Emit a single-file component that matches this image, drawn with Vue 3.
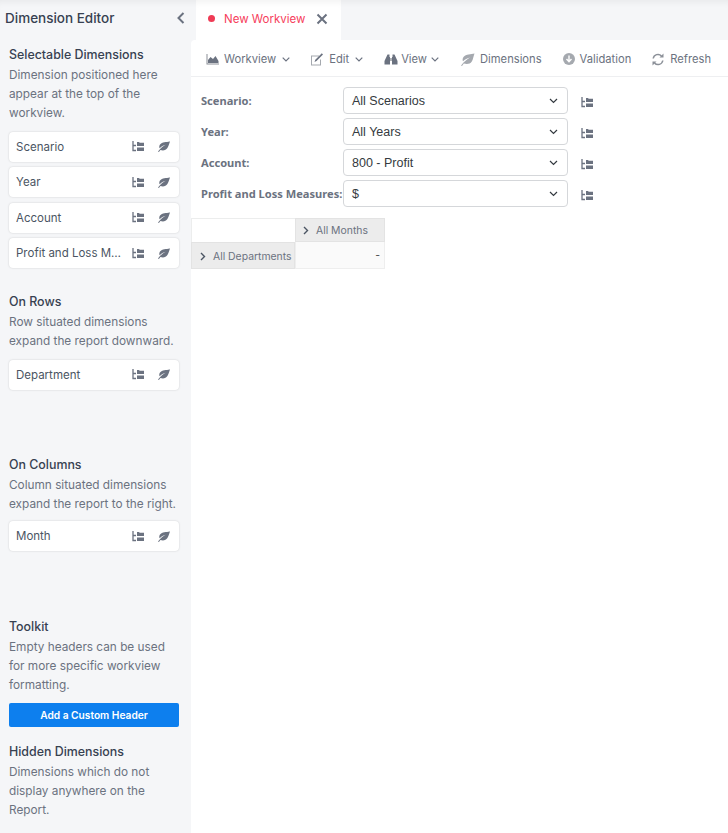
<script setup>
const selectable = ['Scenario', 'Year', 'Account', 'Profit and Loss Measures']
const filters = [
  { label: 'Scenario:', value: 'All Scenarios' },
  { label: 'Year:', value: 'All Years' },
  { label: 'Account:', value: '800 - Profit' },
  { label: 'Profit and Loss Measures:', value: '$' },
]
const tools = [
  { label: 'Workview', icon: 'chart', caret: true },
  { label: 'Edit', icon: 'edit', caret: true },
  { label: 'View', icon: 'binoc', caret: true },
  { label: 'Dimensions', icon: 'leaf', caret: false },
  { label: 'Validation', icon: 'down', caret: false },
  { label: 'Refresh', icon: 'refresh', caret: false },
]
</script>

<template>
  <div class="app">
    <aside class="side">
      <div class="side-head">
        <span class="side-title">Dimension Editor</span>
        <svg class="collapse" viewBox="0 0 10 14" width="10" height="14"><path d="M7.5 2 2.5 7l5 5" fill="none" stroke="#6b7280" stroke-width="2"/></svg>
      </div>

      <section class="sec sec-select">
        <h3>Selectable Dimensions</h3>
        <p>Dimension positioned here appear at the top of the workview.</p>
        <div class="cards">
          <div v-for="d in selectable" :key="d" class="card">
            <span class="card-name">{{ d }}</span>
            <svg class="ico-tree" viewBox="0 0 12 11" width="12" height="11"><path d="M1 0v9.500h3M1 4.500h3" fill="none" stroke="#6b7280" stroke-width="1.300"/><path d="M5 1h2l.7.8H12V5H5zM5 6.500h7V10H5z" fill="#6b7280"/></svg>
            <svg class="ico-leaf" viewBox="0 0 13 11" width="13" height="11"><path d="M12.500.5C9.500 1.300 5 .8 3 3.500 2 5 2.200 6.300 2.600 7.200 5 5 7 4.200 8.800 3.800 6.500 5 4 6.500 1 10.500l.9.400 1.500-2c2.500 1 5.500.5 7-1.800 1.200-1.800 1.700-4.500 2.600-6.600z" fill="#6b7280"/></svg>
          </div>
        </div>
      </section>

      <section class="sec sec-rows">
        <h3>On Rows</h3>
        <p>Row situated dimensions expand the report downward.</p>
        <div class="cards">
          <div class="card">
            <span class="card-name">Department</span>
            <svg class="ico-tree" viewBox="0 0 12 11" width="12" height="11"><path d="M1 0v9.500h3M1 4.500h3" fill="none" stroke="#6b7280" stroke-width="1.300"/><path d="M5 1h2l.7.8H12V5H5zM5 6.500h7V10H5z" fill="#6b7280"/></svg>
            <svg class="ico-leaf" viewBox="0 0 13 11" width="13" height="11"><path d="M12.500.5C9.500 1.300 5 .8 3 3.500 2 5 2.200 6.300 2.600 7.200 5 5 7 4.200 8.800 3.800 6.500 5 4 6.500 1 10.500l.9.400 1.500-2c2.500 1 5.500.5 7-1.800 1.200-1.800 1.700-4.500 2.600-6.600z" fill="#6b7280"/></svg>
          </div>
        </div>
      </section>

      <section class="sec sec-cols">
        <h3>On Columns</h3>
        <p>Column situated dimensions expand the report to the right.</p>
        <div class="cards">
          <div class="card">
            <span class="card-name">Month</span>
            <svg class="ico-tree" viewBox="0 0 12 11" width="12" height="11"><path d="M1 0v9.500h3M1 4.500h3" fill="none" stroke="#6b7280" stroke-width="1.300"/><path d="M5 1h2l.7.8H12V5H5zM5 6.500h7V10H5z" fill="#6b7280"/></svg>
            <svg class="ico-leaf" viewBox="0 0 13 11" width="13" height="11"><path d="M12.500.5C9.500 1.300 5 .8 3 3.500 2 5 2.200 6.300 2.600 7.200 5 5 7 4.200 8.800 3.800 6.500 5 4 6.500 1 10.500l.9.400 1.500-2c2.500 1 5.500.5 7-1.800 1.200-1.800 1.700-4.500 2.600-6.600z" fill="#6b7280"/></svg>
          </div>
        </div>
      </section>

      <section class="sec sec-tool">
        <h3>Toolkit</h3>
        <p>Empty headers can be used for more specific workview formatting.</p>
        <button class="add">Add a Custom Header</button>
      </section>

      <section class="sec">
        <h3>Hidden Dimensions</h3>
        <p>Dimensions which do not display anywhere on the Report.</p>
      </section>
    </aside>

    <div class="main">
      <div class="tabs">
        <div class="tab">
          <span class="dot"></span>
          <span class="tab-label">New Workview</span>
          <svg class="tab-close" viewBox="0 0 12 12" width="12" height="12"><path d="M1.500 1.500l9 9M10.500 1.500l-9 9" stroke="#6b7280" stroke-width="2"/></svg>
        </div>
      </div>
      <div class="panel">
        <div class="toolbar">
          <div v-for="t in tools" :key="t.label" class="tool" :class="'tool-' + t.icon">
            <svg v-if="t.icon === 'chart'" viewBox="0 0 13 11" width="13" height="11"><path d="M.5 0v10.500H13v-1H1.500V0z" fill="#8b9098"/><path d="M2 9V6l2.500-3L7 5l2.500-3L12.500 7v2z" fill="#6b7280"/></svg>
            <svg v-else-if="t.icon === 'edit'" viewBox="0 0 14 13" width="14" height="13"><path d="M1 2.500h8v1H2v8h8V7l1-1v6.500H1z" fill="#a5a9af"/><path d="M13 1.500 6.500 8 4.500 9l.8-2.200L11.800.300z" fill="#6b7280"/></svg>
            <svg v-else-if="t.icon === 'binoc'" viewBox="0 0 14 11" width="14" height="11"><path d="M3.500.5h2v2.500H6V10.500H.5V7zM10.500.5h-2V3H8v7.500h5.500V7z" fill="#6b7280"/><path d="M6 4h2v3H6z" fill="#b0b3b8"/></svg>
            <svg v-else-if="t.icon === 'leaf'" viewBox="0 0 15 13" width="15" height="13"><path d="M14.500.5C11 1.500 6 1 3.500 4 2.300 5.600 2.500 7.300 3 8.300 5.500 6 8 5 10 4.500 7.500 6 4.500 8 1 12.500l1 .4 1.800-2.400c3 1 6.300.6 8-2 1.400-2.200 1.700-5.500 2.700-8z" fill="#a5a9af"/></svg>
            <svg v-else-if="t.icon === 'down'" viewBox="0 0 12 12" width="12" height="12"><circle cx="6" cy="6" r="6" fill="#a5a9af"/><path d="M6 2.500v6M3.500 6 6 8.700 8.500 6" fill="none" stroke="#fff" stroke-width="1.400"/></svg>
            <svg v-else viewBox="0 0 14 13" width="14" height="13"><path d="M2.200 5.500A4.800 4.800 0 0 1 10.500 3M11.800 7.500A4.800 4.800 0 0 1 3.500 10" fill="none" stroke="#8b9098" stroke-width="1.500"/><path d="M12.500.5v4h-4zM1.500 12.500v-4h4z" fill="#8b9098"/></svg>
            <span>{{ t.label }}</span>
            <svg v-if="t.caret" class="caret" viewBox="0 0 8 5" width="8" height="5"><path d="M.7.7 4 4l3.300-3.300" fill="none" stroke="#6b7280" stroke-width="1.200"/></svg>
          </div>
        </div>

        <div class="filters">
          <div v-for="f in filters" :key="f.label" class="filter">
            <label>{{ f.label }}</label>
            <div class="select">
              <span>{{ f.value }}</span>
              <svg viewBox="0 0 9 6" width="9" height="6"><path d="M1 1l3.500 3.500L8 1" fill="none" stroke="#343a40" stroke-width="1.200"/></svg>
            </div>
            <svg class="ico-tree f-tree" viewBox="0 0 12 11" width="12" height="11"><path d="M1 0v9.500h3M1 4.500h3" fill="none" stroke="#6b7280" stroke-width="1.300"/><path d="M5 1h2l.7.8H12V5H5zM5 6.500h7V10H5z" fill="#6b7280"/></svg>
          </div>
        </div>

        <div class="grid">
          <div class="g-empty"></div>
          <div class="g-head g-col">
            <svg viewBox="0 0 6 9" width="6" height="9"><path d="M1 1l3.500 3.500L1 8" fill="none" stroke="#4b5563" stroke-width="1.400"/></svg>
            <span>All Months</span>
          </div>
          <div class="g-head g-row">
            <svg viewBox="0 0 6 9" width="6" height="9"><path d="M1 1l3.500 3.500L1 8" fill="none" stroke="#4b5563" stroke-width="1.400"/></svg>
            <span>All Departments</span>
          </div>
          <div class="g-cell">-</div>
        </div>
      </div>
    </div>
  </div>
</template>

<style>
html, body { margin: 0; background: #f5f6f8; }
</style>

<style scoped>
.app {
  display: flex;
  width: 728px;
  height: 833px;
  overflow: hidden;
  background: #f5f6f8;
  box-shadow: inset 0 7px 7px -5px rgba(0, 0, 0, .06);
  font-family: Inter, "Noto Sans", sans-serif;
  color: #6b7280;
}
.side {
  width: 191px;
  flex: none;
  box-sizing: border-box;
}
.side-head {
  height: 36px;
  padding: 0 5px;
  display: flex;
  align-items: center;
  justify-content: space-between;
}
.side-title { font-size: 13.5px; font-weight: 500; color: #374151; }
.sec { padding: 0 12px 0 9px; }
.sec-select { margin-top: 9px; }
.sec-rows { margin-top: 24px; height: 163px; }
.sec-cols { height: 162px; }
.sec-cols .cards { margin-top: 7.4px; }
h3 {
  margin: 0;
  font-size: 12.4px;
  line-height: 19px;
  font-weight: 500;
  color: #374151;
}
p {
  margin: 0;
  padding-top: 2px;
  font-size: 11.8px;
  line-height: 19px;
  color: #6b7280;
}
.cards { display: flex; flex-direction: column; gap: 5.5px; margin-top: 8.6px; }
.card {
  height: 30px;
  box-sizing: border-box;
  background: #fff;
  border-radius: 4px;
  box-shadow: 0 0 2px rgba(0, 0, 0, .18);
  display: flex;
  align-items: center;
  padding: 0 9px 0 7px;
  font-size: 11.5px;
  color: #4b5563;
}
.card-name {
  flex: 1;
  min-width: 0;
  white-space: nowrap;
  overflow: hidden;
  text-overflow: ellipsis;
}
.ico-tree { flex: none; margin-left: 8px; }
.ico-leaf { flex: none; margin-left: 13px; }
.sec-tool { height: 125px; }
.add {
  display: block;
  width: 170px;
  height: 24px;
  margin-top: 7.6px;
  padding: 0;
  border: 0;
  border-radius: 2px;
  background: #0d7fee;
  color: #fff;
  font: 600 10.2px Inter, sans-serif;
}
.main { flex: 1; min-width: 0; display: flex; flex-direction: column; }
.tabs { height: 40px; padding-left: 5px; flex: none; }
.tab {
  width: 145px;
  height: 40px;
  box-sizing: border-box;
  background: #fff;
  display: flex;
  align-items: center;
  padding: 0 0 3px 12px;
  gap: 9px;
  box-shadow: inset 0 7px 7px -5px rgba(0, 0, 0, .06);
}
.dot { width: 7px; height: 7px; border-radius: 50%; background: #ef3b55; }
.tab-label { font-size: 11.5px; color: #f6405c; }
.tab-close { margin-left: 2px; }
.panel { flex: 1; background: #fff; border-top-left-radius: 4px; }
.toolbar {
  height: 37px;
  box-sizing: border-box;
  border-bottom: 1px solid #eeeff1;
  display: flex;
  align-items: center;
  padding: 2px 0 0 15px;
  gap: 20px;
  font-size: 11.2px;
  color: #6b7280;
}
.tool { display: flex; align-items: center; gap: 5px; white-space: nowrap; }
.tool-binoc { gap: 3px; margin-left: 1px; }
.tool-leaf { margin-left: 1px; }
.tool-down { margin-left: 1px; }
.caret { margin-left: 1px; }
.filters { display: flex; flex-direction: column; gap: 4px; padding: 10px 0 0 10px; }
.filter { display: flex; align-items: center; height: 27px; }
.filter label {
  width: 142px;
  flex: none;
  font: 700 11.1px "Noto Sans", sans-serif;
  color: #6b7280;
  white-space: nowrap;
}
.select {
  width: 225px;
  height: 27px;
  box-sizing: border-box;
  border: 1px solid #d5d7da;
  border-radius: 4px;
  display: flex;
  align-items: center;
  justify-content: space-between;
  padding: 0 9px 0 8px;
  font: 12.5px "Liberation Sans", sans-serif;
  color: #343a40;
}
.f-tree { margin-top: 3px; margin-left: 13px; }
.grid {
  display: grid;
  grid-template-columns: 104px 90px;
  grid-template-rows: 24px 27px;
  margin-top: 11px;
  font-size: 10.4px;
}
.g-empty { border: 1px solid #eceded; border-width: 1px 0 0 1px; }
.g-head {
  background: #ececec;
  display: flex;
  align-items: center;
  color: #6b7280;
  white-space: nowrap;
  box-sizing: border-box;
  border: 1px solid #e3e3e3;
  padding-top: 1px;
}
.g-col { padding-left: 7px; gap: 7px; }
.g-row { padding-left: 8px; gap: 7px; }
.g-cell {
  background: #fafafa;
  border: 1px solid #eeeeee;
  border-top: 0;
  box-sizing: border-box;
  display: flex;
  align-items: center;
  justify-content: flex-end;
  padding-right: 4px;
  color: #444;
}
</style>
